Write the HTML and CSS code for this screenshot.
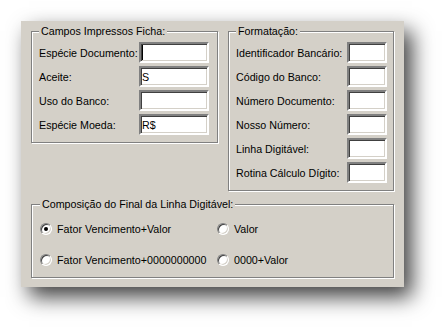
FILE: index.html
```html
<!DOCTYPE html>
<html lang="pt-BR">
<head>
    <meta charset="UTF-8">
    <meta name="viewport" content="width=device-width, initial-scale=1.0">
    <title>Configuração do Boleto</title>
    <link rel="stylesheet" href="styles.css">
</head>
<body>
    <div class="dialog">
        <div class="top">
            <fieldset class="group campos">
                <legend>Campos Impressos Ficha:</legend>
                <label class="row"><span>Espécie Documento:</span><input type="text" class="field wide caret"></label>
                <label class="row"><span>Aceite:</span><input type="text" class="field wide" value="S"></label>
                <label class="row"><span>Uso do Banco:</span><input type="text" class="field wide"></label>
                <label class="row"><span>Espécie Moeda:</span><input type="text" class="field wide" value="R$"></label>
            </fieldset>
            <fieldset class="group formatacao">
                <legend>Formatação:</legend>
                <label class="row"><span>Identificador Bancário:</span><input type="text" class="field small"></label>
                <label class="row"><span>Código do Banco:</span><input type="text" class="field small"></label>
                <label class="row"><span>Número Documento:</span><input type="text" class="field small"></label>
                <label class="row"><span>Nosso Número:</span><input type="text" class="field small"></label>
                <label class="row"><span>Linha Digitável:</span><input type="text" class="field small"></label>
                <label class="row"><span>Rotina Cálculo Dígito:</span><input type="text" class="field small"></label>
            </fieldset>
        </div>
        <fieldset class="group composicao">
            <legend>Composição do Final da Linha Digitável:</legend>
            <div class="options">
                <label class="opt"><span class="radio checked"></span>Fator Vencimento+Valor</label>
                <label class="opt"><span class="radio"></span>Valor</label>
                <label class="opt"><span class="radio"></span>Fator Vencimento+0000000000</label>
                <label class="opt"><span class="radio"></span>0000+Valor</label>
            </div>
        </fieldset>
    </div>
</body>
</html>
```

FILE: styles.css
```css
html, body {
    height: 100%;
}
body {
    margin: 0;
    background-color: #fff;
    font-family: "Liberation Sans", Arial, sans-serif;
    font-size: 10.7px;
    color: #000;
}
.dialog {
    margin: 21px 0 0 21px;
    width: 383px;
    height: 266px;
    box-sizing: border-box;
    padding: 4px 10px 9px 10px;
    background-color: #d4d0c8;
    box-shadow: 8px 10px 20px rgba(0, 0, 0, 0.75);
}
.top {
    display: flex;
    align-items: flex-start;
    gap: 10px;
}
.group {
    box-sizing: border-box;
    margin: 0;
    min-inline-size: 0;
    border: 1px solid #808080;
    box-shadow: inset 1px 1px 0 #fff, 1px 1px 0 #fff;
    padding: 4px 6px 7px 7px;
    display: flex;
    flex-direction: column;
    gap: 3px;
}
.group legend {
    padding: 0 2px;
    line-height: 13px;
    white-space: nowrap;
    background-color: #d4d0c8;
}
.campos {
    width: 187px;
    padding-right: 8px;
}
.formatacao {
    width: 166px;
}
.row {
    display: flex;
    align-items: center;
    justify-content: space-between;
    height: 21px;
    white-space: nowrap;
}
.field {
    box-sizing: border-box;
    flex-shrink: 0;
    height: 21px;
    margin: 0;
    padding: 0 1px;
    border: 2px solid;
    border-color: #808080 #fff #fff #808080;
    box-shadow: inset 1px 1px 0 #404040, inset -1px -1px 0 #d4d0c8;
    background-color: #fff;
    font: inherit;
    color: #000;
    outline: none;
}
.field.wide {
    width: 70px;
}
.field.small {
    width: 40px;
}
.field.caret {
    background: linear-gradient(#000, #000) 1px 1px / 1px 15px no-repeat, #fff;
}
.composicao {
    width: 363px;
    margin-top: 7px;
    padding: 11px 0 11px 8px;
}
.options {
    display: grid;
    grid-template-columns: 177px 1fr;
    grid-auto-rows: 13px;
    row-gap: 18px;
}
.opt {
    display: flex;
    align-items: center;
    white-space: nowrap;
}
.radio {
    box-sizing: border-box;
    flex-shrink: 0;
    width: 12px;
    height: 12px;
    margin-right: 5px;
    border-radius: 50%;
    border: 1px solid;
    border-color: #808080 #fff #fff #808080;
    box-shadow: inset 1px 1px 0 #404040, inset -1px -1px 0 #d4d0c8;
    background-color: #fff;
    display: flex;
    align-items: center;
    justify-content: center;
}
.radio.checked::after {
    content: "";
    width: 4px;
    height: 4px;
    border-radius: 50%;
    background-color: #000;
}
```
